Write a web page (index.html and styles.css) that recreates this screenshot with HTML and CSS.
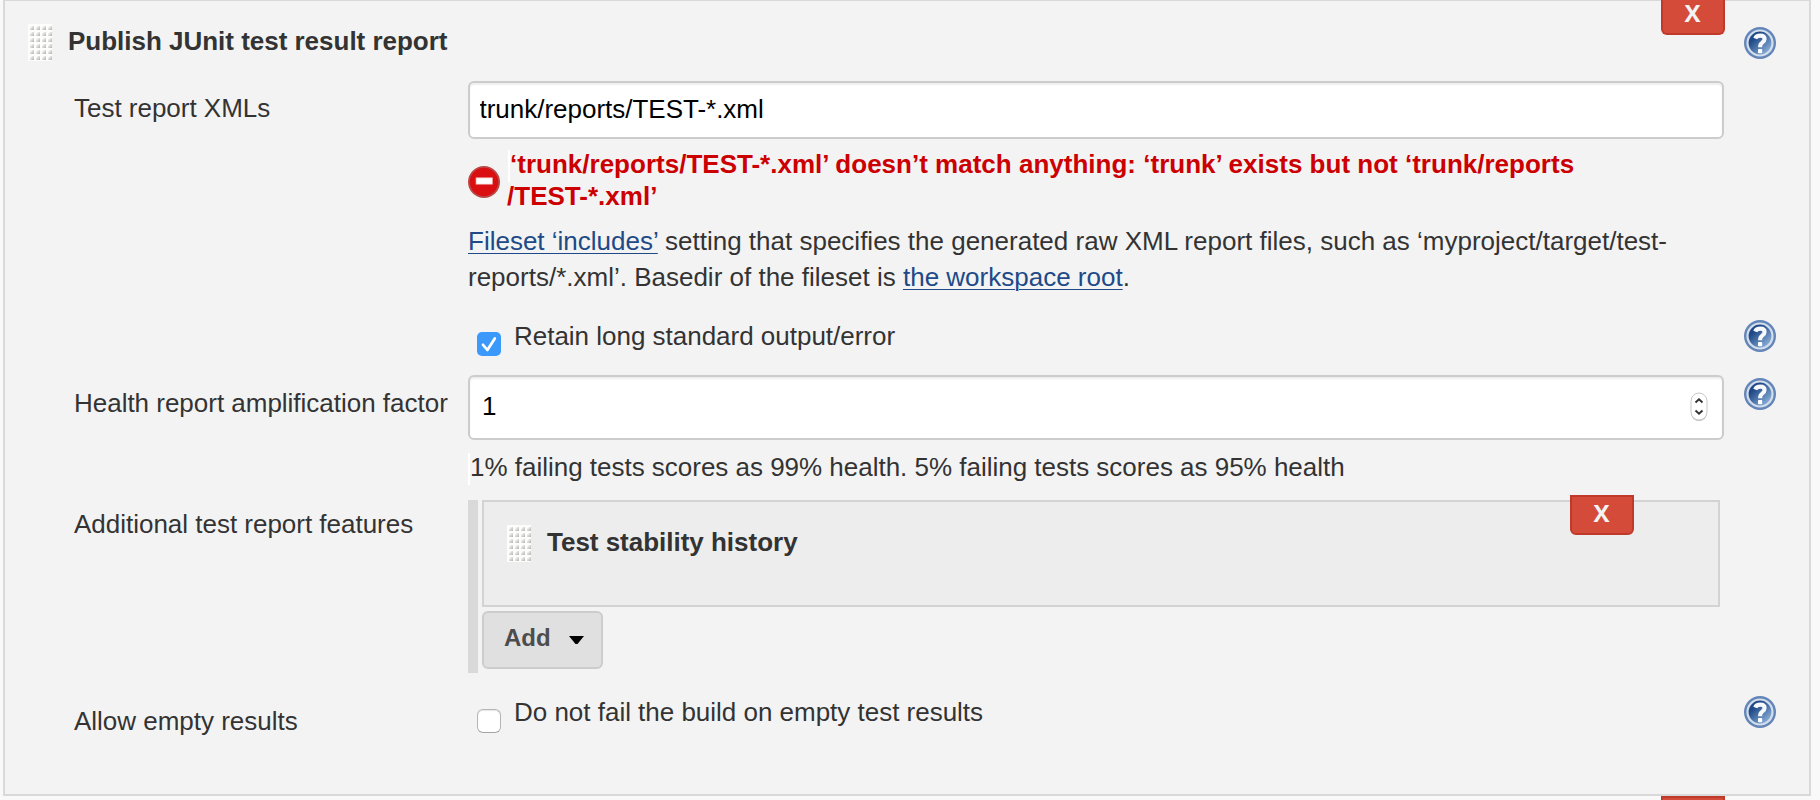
FILE: index.html
```html
<!DOCTYPE html>
<html lang="en">
<head>
<meta charset="utf-8">
<title>Publish JUnit test result report</title>
<link rel="stylesheet" href="styles.css">
</head>
<body>
<svg class="defs" width="0" height="0" aria-hidden="true">
  <defs>
    <linearGradient id="blue" x1="0.1" y1="0.1" x2="0.85" y2="0.9">
      <stop offset="0.25" stop-color="#204a87"/>
      <stop offset="1" stop-color="#8fb3dc"/>
    </linearGradient>
    <linearGradient id="dot" x1="0" y1="0" x2="1" y2="1">
      <stop offset="0.2" stop-color="#f4f4f2"/>
      <stop offset="1" stop-color="#b0b0ab"/>
    </linearGradient>
    <pattern id="dots" x="1" y="0" width="6" height="6" patternUnits="userSpaceOnUse">
      <path d="M1 6V3.5L3 2H5V6Z" fill="url(#dot)"/>
    </pattern>
    <symbol id="grip" viewBox="0 0 24 37">
      <rect width="24" height="37" fill="#fdfdfc"/>
      <rect x="1" width="23" height="36" fill="url(#dots)"/>
    </symbol>
    <symbol id="help" viewBox="0 0 32 32">
      <circle cx="16" cy="16" r="16" fill="#6485b8"/>
      <circle cx="16" cy="16" r="12.5" fill="url(#blue)" stroke="#d3deec" stroke-width="2.2"/>
      <path d="M11.2 11.4Q12.3 8.6 16.2 8.6Q20.6 8.6 20.6 12.1Q20.6 14 18.2 15.6Q16.1 17 16.1 20.2" fill="none" stroke="#f7f9fc" stroke-width="4.1"/>
      <rect x="14" y="22" width="4.2" height="4.2" rx=".8" fill="#fff"/>
    </symbol>
  </defs>
</svg>
<main class="panel">
  <button class="delete">X</button>
  <header class="head">
    <svg class="grip"><use href="#grip"/></svg>
    <h2 class="title">Publish JUnit test result report</h2>
    <svg class="help"><use href="#help"/></svg>
  </header>

  <div class="row files">
    <label class="label">Test report XMLs</label>
    <div class="field">
      <input class="input" type="text" value="trunk/reports/TEST-*.xml">
      <div class="error">
        <svg class="stop" viewBox="0 0 32 32">
          <circle cx="16" cy="16" r="16" fill="#b94a48"/>
          <circle cx="16" cy="16" r="14.2" fill="#d90f12"/>
          <rect x="8" y="11.8" width="16.5" height="6.4" fill="#fff" stroke="#f0a0a0" stroke-width=".7"/>
        </svg>
        <p class="error-text"><span class="tick"></span><span class="first">‘trunk/reports/TEST-*.xml’ doesn’t match anything: ‘trunk’ exists but not ‘trunk/reports</span><br>/TEST-*.xml’</p>
      </div>
      <p class="desc"><a class="link" href="#">Fileset ‘includes’</a> setting that specifies the generated raw XML report files, such as ‘myproject/target/test-<br>reports/*.xml’. Basedir of the fileset is <a class="link" href="#">the workspace root</a>.</p>
    </div>
  </div>

  <div class="row retain">
    <div class="field check-field">
      <svg class="check" viewBox="0 0 24 24">
        <rect width="24" height="24" rx="5" fill="#3b99fc"/>
        <path d="M6 12.8L10.4 18L17.8 6.5" fill="none" stroke="#fff" stroke-width="2.7" stroke-linecap="round" stroke-linejoin="round"/>
      </svg>
      <span class="check-text">Retain long standard output/error</span>
    </div>
    <svg class="help"><use href="#help"/></svg>
  </div>

  <div class="row health">
    <label class="label">Health report amplification factor</label>
    <div class="field">
      <div class="number">
        <span>1</span>
        <svg class="spin" viewBox="0 0 18 30">
          <rect x="1" y="2" width="16" height="27" rx="8" fill="#bbb"/>
          <rect x="1" y="1" width="16" height="27" rx="8" fill="#fff" stroke="#c8c8c8"/>
          <path d="M5.5 10.5L9 7.2L12.5 10.5M5.5 18.5L9 21.8L12.5 18.5" fill="none" stroke="#333" stroke-width="1.9"/>
        </svg>
      </div>
      <p class="score"><span class="tick"></span>1% failing tests scores as 99% health. 5% failing tests scores as 95% health</p>
    </div>
    <svg class="help"><use href="#help"/></svg>
  </div>

  <div class="row features">
    <label class="label">Additional test report features</label>
    <div class="field repeat">
      <section class="chunk">
        <button class="delete inner">X</button>
        <svg class="grip"><use href="#grip"/></svg>
        <h3 class="title">Test stability history</h3>
      </section>
      <button class="add">Add <svg class="caret" viewBox="0 0 15 8"><path d="M0 0H15L8.5 8H6.5Z"/></svg></button>
    </div>
  </div>

  <div class="row empty">
    <label class="label">Allow empty results</label>
    <div class="field check-field">
      <span class="box"></span>
      <span class="check-text">Do not fail the build on empty test results</span>
    </div>
    <svg class="help"><use href="#help"/></svg>
  </div>
</main>
<div class="next"></div>
</body>
</html>
```
FILE: styles.css
```css
* { box-sizing: border-box; }
body {
  margin: 0;
  height: 800px;
  overflow: hidden;
  background: #f9f9f9;
  color: #333;
  font: 26px/32px "Liberation Sans", Arial, sans-serif;
  letter-spacing: -.015px;
}
h2, h3, p { margin: 0; }
.defs { position: absolute; }
.panel {
  position: relative;
  width: 1808px;
  height: 796px;
  margin-left: 3px;
  background: #f3f3f3;
  border: 2px solid #d9d9d9;
  border-top-width: 1px;
}
.head { display: flex; align-items: flex-start; height: 80px; padding: 23px 33px 0 23px; }
.title { font-size: 26px; line-height: 32px; font-weight: bold; margin-left: 16px; white-space: nowrap; }
.grip { width: 24px; height: 37px; flex: none; }
.help { width: 32px; height: 32px; flex: none; }
.head .title { margin-top: 1px; }
.head .help { margin: 3px 0 0 auto; }
.row { display: grid; grid-template-columns: 463px 1256px 32px; align-items: start; }
.row .help { margin-left: 20px; }
.label { grid-column: 1; padding-left: 69px; white-space: nowrap; }
.field { grid-column: 2; }
.files { height: 239px; }
.files .label { margin-top: 11px; }
.input, .number {
  display: block;
  width: 100%;
  height: 58px;
  padding: 0 10px 1px 9.5px;
  border: 2px solid #ccc;
  border-radius: 6px;
  background: #fff;
  box-shadow: inset 0 2px 2px rgba(0, 0, 0, .07);
  color: #000;
  font: inherit;
  letter-spacing: inherit;
  outline: 0;
}
.error { display: flex; height: 84px; padding-top: 9px; }
.stop { width: 32px; height: 32px; margin: 18px 7px 0 0; flex: none; }
.error-text { height: 64px; color: #c00; font-weight: bold; white-space: nowrap; letter-spacing: .01px; }
.tick { display: inline-block; width: 2px; height: 32px; margin: 2px 0 -2px; background: #fff; vertical-align: top; }
.error-text .tick { margin-left: 1px; }
.desc { line-height: 36px; white-space: nowrap; letter-spacing: 0; }
.link { color: #204a87; text-decoration: underline; text-decoration-thickness: 1px; text-underline-offset: 3px; }
.retain { height: 55px; }
.check-field { display: flex; }
.check, .box { width: 24px; height: 24px; margin: 12px 13px 0 9px; flex: none; }
.box { margin-top: 13px; border: 1px solid #b5b5b5; border-bottom-color: #a5a5a5; border-radius: 6px; background: #fff; box-shadow: inset 0 1px 1px rgba(0, 0, 0, .1); }
.health { height: 125px; }
.health .label { margin-top: 12px; }
.health .help { margin-top: 3px; }
.number { display: flex; align-items: center; justify-content: space-between; height: 65px; padding: 0 14px 2px 12px; }
.number span { margin-bottom: 2px; }
.spin { width: 18px; height: 30px; }
.score { margin-top: 11px; white-space: nowrap; }
.features { height: 196px; }
.features .label { margin-top: 8px; }
.repeat { height: 173px; padding-left: 4px; padding-right: 4px; border-left: 10px solid #d9d9d9; }
.chunk { position: relative; display: flex; height: 107px; padding: 23px 23px; border: 2px solid #d3d3d3; background: #ededed; }
.chunk .title { margin-top: 1px; }
.delete {
  position: absolute;
  top: -1px;
  right: 84px;
  width: 64px;
  height: 35px;
  padding: 0 1px 8px 0;
  border: 2px solid #bf3a2b;
  border-top: 0;
  border-radius: 0 0 6px 6px;
  background: #d44b3a;
  color: #f3f3f3;
  font: bold 24px/24px "Open Sans", sans-serif;
}
.delete.inner { top: -7px; right: 84px; height: 40px; padding-bottom: 4px; border-top: 2px solid #bf3a2b; }
.add {
  display: flex;
  align-items: center;
  width: 121px;
  height: 58px;
  margin-top: 4px;
  padding: 0 0 5px 20px;
  border: 2px solid #ccc;
  border-radius: 6px;
  background: #e0e0e0;
  color: #4d4d4d;
  font: bold 24px/28px "Liberation Sans", Arial, sans-serif;
}
.caret { width: 15px; height: 8px; margin: 4px 0 0 18px; }
.empty .label { margin-top: 9px; }
.next { width: 64px; height: 4px; margin-left: 1661px; border: 2px solid #bf3a2b; border-bottom: 0; background: #d44b3a; }
```
